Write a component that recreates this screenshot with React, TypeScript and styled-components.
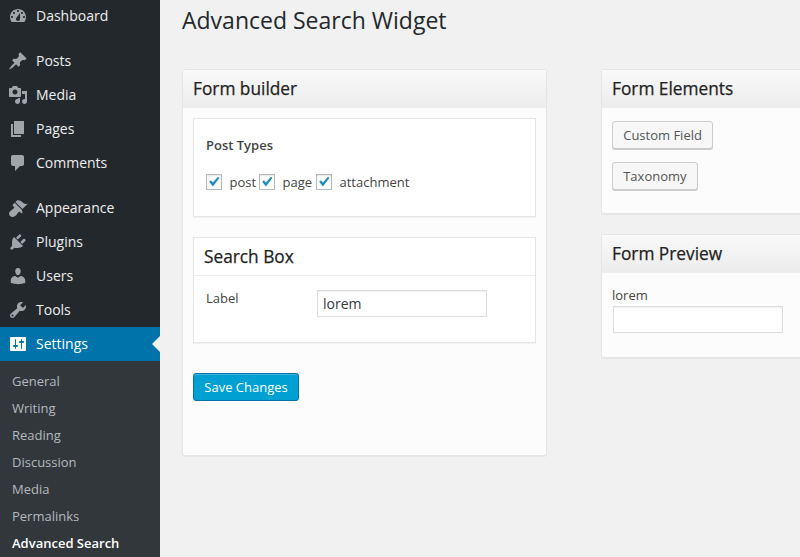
import React from 'react';
import styled, { createGlobalStyle } from 'styled-components';

const GlobalStyle = createGlobalStyle`
  html, body {
    margin: 0;
    padding: 0;
    height: 100%;
    overflow: hidden;
    background: #f1f1f1;
  }
  * {
    box-sizing: border-box;
  }
  body {
    font-family: "Open Sans", "Liberation Sans", sans-serif;
    font-size: 13px;
    color: #444;
  }
`;

const Page = styled.div`
  display: flex;
  width: 800px;
  height: 557px;
  overflow: hidden;
  background: #f1f1f1;
`;

const Sidebar = styled.nav`
  flex: 0 0 160px;
  height: 557px;
  background: #23282d;
  overflow: hidden;
`;

const MenuGroup = styled.div`
  margin-bottom: 11px;

  &:first-child {
    margin-top: -1px;
  }
`;

const MenuItem = styled.a<{ $active?: boolean }>`
  position: relative;
  display: flex;
  align-items: center;
  height: 34px;
  padding-left: 8px;
  gap: 8px;
  font-size: 14px;
  color: ${(p) => (p.$active ? '#fff' : '#eee')};
  background: ${(p) => (p.$active ? '#0073aa' : 'transparent')};

  svg {
    flex: 0 0 20px;
    fill: ${(p) => (p.$active ? '#fff' : '#a0a5aa')};
  }
`;

const MenuLabel = styled.span`
  margin-bottom: 2px;
`;

const ActiveArrow = styled.span`
  position: absolute;
  right: 0;
  top: 50%;
  margin-top: -8px;
  border: 8px solid transparent;
  border-left-width: 0;
  border-right-color: #f1f1f1;
`;

const Submenu = styled.div`
  background: #32373c;
  padding-top: 6px;
  height: 196px;
`;

const SubItem = styled.a<{ $current?: boolean }>`
  display: flex;
  align-items: center;
  height: 27px;
  padding-left: 12px;
  font-size: 13px;
  font-weight: ${(p) => (p.$current ? 600 : 400)};
  color: ${(p) => (p.$current ? '#fff' : '#b4b9be')};
`;

const Main = styled.main`
  flex: 1;
  min-width: 0;
  padding-left: 22px;
`;

const Title = styled.h1`
  margin: 0;
  height: 69px;
  padding-top: 3px;
  font-size: 23px;
  line-height: 34px;
  font-weight: 400;
  color: #23282d;
`;

const Columns = styled.div`
  display: flex;
  align-items: flex-start;
  gap: 54px;
`;

const BuilderColumn = styled.div`
  flex: 0 0 365px;
`;

const SideColumn = styled.div`
  flex: 0 0 240px;
  display: flex;
  flex-direction: column;
  gap: 20px;
`;

const Panel = styled.section<{ $height: number }>`
  height: ${(p) => p.$height}px;
  background: #fcfcfc;
  border: 1px solid #e5e5e5;
  border-radius: 3px;
  box-shadow: 0 1px 1px rgba(0, 0, 0, 0.04);
`;

const PanelHeader = styled.h3`
  margin: 0;
  height: 38px;
  padding-left: 10px;
  font-size: 17.3px;
  line-height: 38px;
  font-weight: 400;
  color: #222;
  -webkit-text-stroke: 0.25px #222;
  background: linear-gradient(to bottom, #f9f9f9, #ececec);
`;

const BuilderBody = styled.div`
  padding: 10px;
  display: flex;
  flex-direction: column;
  gap: 20px;
`;

const Card = styled.div<{ $height: number }>`
  height: ${(p) => p.$height}px;
  background: #fff;
  border: 1px solid #e5e5e5;
  box-shadow: 0 1px 1px rgba(0, 0, 0, 0.04);
`;

const TypesBody = styled.div`
  padding: 17px 12px 0;
`;

const TypesLabel = styled.div`
  font-size: 13px;
  line-height: 18px;
  font-weight: 600;
  color: #444;
  margin-bottom: 20px;
`;

const CheckRow = styled.div`
  display: flex;
  align-items: center;
  height: 16px;
  gap: 3px;
`;

const CheckLabel = styled.label<{ $width?: number }>`
  display: flex;
  align-items: center;
  gap: 7.5px;
  width: ${(p) => (p.$width ? `${p.$width}px` : 'auto')};
  font-size: 13px;
  line-height: 16px;
  color: #444;
`;

const CheckBox = styled.span`
  display: flex;
  align-items: center;
  justify-content: center;
  flex: 0 0 16px;
  width: 16px;
  height: 16px;
  background: #fff;
  border: 1px solid #b4b9be;
  box-shadow: inset 0 1px 2px rgba(0, 0, 0, 0.1);

  svg {
    fill: #1e8cbe;
  }
`;

const CardTitle = styled.h4`
  margin: 0;
  height: 38px;
  padding-left: 10px;
  font-size: 17.3px;
  line-height: 38px;
  font-weight: 400;
  color: #222;
  -webkit-text-stroke: 0.25px #222;
  border-bottom: 1px solid #eee;
`;

const FieldRow = styled.div`
  display: flex;
  align-items: flex-start;
  padding: 14px 0 0 12px;
`;

const FieldLabel = styled.label`
  flex: 0 0 111px;
  margin-top: -1px;
  font-size: 13px;
  line-height: 18px;
  color: #444;
`;

const TextInput = styled.input`
  display: block;
  width: 170px;
  height: 27px;
  padding: 0 5px;
  font-family: inherit;
  font-size: 14px;
  color: #32373c;
  background: #fff;
  border: 1px solid #ddd;
  border-radius: 0;
  outline: none;
  box-shadow: inset 0 1px 2px rgba(0, 0, 0, 0.07);
`;

const PrimaryButton = styled.button`
  display: block;
  width: 106px;
  height: 28px;
  margin-top: 10px;
  padding: 0;
  font-family: inherit;
  font-size: 13px;
  color: #fff;
  background: #00a0d2;
  border: 1px solid #0073aa;
  border-radius: 3px;
  box-shadow: inset 0 1px 0 rgba(120, 200, 230, 0.5);
`;

const ElementsBody = styled.div`
  padding: 13px 10px 0;
  display: flex;
  flex-direction: column;
  align-items: flex-start;
  gap: 13px;
`;

const SecondaryButton = styled.button`
  height: 28px;
  padding: 0 10.2px;
  font-family: inherit;
  font-size: 13px;
  color: #555;
  background: #f7f7f7;
  border: 1px solid #ccc;
  border-radius: 3px;
  box-shadow: 0 1px 0 #ccc;
`;

const PreviewBody = styled.div`
  padding: 13px 10px 0;
`;

const PreviewLabel = styled.label`
  display: block;
  font-size: 13px;
  line-height: 18px;
  color: #444;
  margin-bottom: 2px;
`;

const PreviewInput = styled(TextInput)`
  margin-left: 1px;
`;

const Dash = ({ d }: { d: string }) => (
  <svg width="20" height="20" viewBox="0 0 20 20" aria-hidden="true">
    <path d={d} />
  </svg>
);

const icons = {
  dashboard:
    'M3.76 16h12.48c1.1-1.37 1.76-3.11 1.76-5 0-4.42-3.58-8-8-8s-8 3.58-8 8c0 1.89.66 3.63 1.76 5zM10 4c.55 0 1 .45 1 1s-.45 1-1 1-1-.45-1-1 .45-1 1-1zM6 6c.55 0 1 .45 1 1s-.45 1-1 1-1-.45-1-1 .45-1 1-1zm8 0c.55 0 1 .45 1 1s-.45 1-1 1-1-.45-1-1 .45-1 1-1zm-5.37 5.55L12 7v6c0 1.1-.9 2-2 2s-2-.9-2-2c0-.57.24-1.08.63-1.45zM4 10c.55 0 1 .45 1 1s-.45 1-1 1-1-.45-1-1 .45-1 1-1zm12 0c.55 0 1 .45 1 1s-.45 1-1 1-1-.45-1-1 .45-1 1-1z',
  posts:
    'M10.44 3.02l1.82-1.82 6.36 6.35-1.83 1.82c-1.05-.68-2.48-.57-3.41.36l-.75.75c-.92.93-1.04 2.35-.35 3.41l-1.83 1.82-2.41-2.41-2.8 2.79c-.42.42-3.38 2.71-3.8 2.29s1.86-3.39 2.28-3.81l2.79-2.79L4.1 9.36l1.83-1.82c1.05.69 2.48.57 3.4-.36l.75-.75c.93-.92 1.05-2.35.36-3.41z',
  media:
    'M13 11V4c0-.55-.45-1-1-1h-1.67L9 1H5L3.67 3H2c-.55 0-1 .45-1 1v7c0 .55.45 1 1 1h10c.55 0 1-.45 1-1zM7 4.5c1.38 0 2.5 1.12 2.5 2.5S8.38 9.5 7 9.5 4.5 8.38 4.5 7 5.62 4.5 7 4.5zM14 6h5v10.5c0 1.38-1.12 2.5-2.5 2.5S14 17.88 14 16.5s1.12-2.5 2.5-2.5c.17 0 .34.02.5.05V9h-3V6zm-4 8.05V13h2v3.5c0 1.38-1.12 2.5-2.5 2.5S7 17.88 7 16.5 8.12 14 9.5 14c.17 0 .34.02.5.05z',
  pages: 'M6 15V2h10v13H6zm-1 1h8v2H3V5h2v11z',
  comments:
    'M5 2h9c1.1 0 2 .9 2 2v7c0 1.1-.9 2-2 2h-2l-5 5v-5H5c-1.1 0-2-.9-2-2V4c0-1.1.9-2 2-2z',
  appearance:
    'M14.48 11.06L7.41 3.99l1.5-1.5c.5-.56 2.3-.47 3.51.32 1.21.8 1.43 1.28 2.91 2.1 1.18.64 2.45 1.26 4.45.85zm-.71.71L6.7 4.7 4.93 6.47c-.39.39-.39 1.02 0 1.41l1.06 1.06c.39.39.39 1.03 0 1.42-.6.6-1.43 1.11-2.21 1.69-.35.26-.7.53-1.01.84C1.43 13.23.91 14.66 1.1 15.9c.19 1.25.65 1.66 1 2.01.35.35.76.81 2 1 1.24.19 2.68-.33 3.99-1.67.31-.31.58-.66.84-1.01.58-.78 1.09-1.61 1.69-2.21.39-.39 1.03-.39 1.42 0l1.06 1.06c.39.39 1.02.39 1.41 0z',
  plugins:
    'M13.11 4.36L9.87 7.6 8 5.73l3.24-3.24c.35-.34 1.05-.2 1.56.32.52.51.66 1.21.31 1.55zm-8 1.77l.91-1.12 9.01 9.01-1.19.84c-.71.71-2.63 1.16-3.82 1.16H6.14L4.9 17.26c-.59.59-1.54.59-2.12 0-.59-.58-.59-1.53 0-2.12l1.24-1.24v-3.88c0-1.13.4-3.19 1.09-3.89zm7.26 3.97l3.24-3.24c.34-.35 1.04-.21 1.55.31.52.51.66 1.21.31 1.55l-3.24 3.25z',
  users:
    'M10 9.25c-2.27 0-2.73-3.44-2.73-3.44C7 4.02 7.82 2 9.97 2c2.16 0 2.98 2.02 2.71 3.81 0 0-.41 3.44-2.68 3.44zm0 2.57L12.72 10c2.39 0 4.52 2.33 4.52 4.53v2.49s-3.65 1.13-7.24 1.13c-3.65 0-7.24-1.13-7.24-1.13v-2.49c0-2.25 1.94-4.48 4.47-4.48z',
  tools:
    'M16.68 9.77c-1.34 1.34-3.3 1.67-4.95.99l-5.41 6.52c-.99.99-2.59.99-3.58 0s-.99-2.59 0-3.57l6.52-5.42c-.68-1.65-.35-3.61.99-4.95 1.28-1.28 3.12-1.62 4.72-1.06l-2.89 2.89 2.82 2.82 2.86-2.87c.53 1.58.18 3.39-1.08 4.65zM3.81 16.21c.4.39 1.04.39 1.43 0 .4-.4.4-1.04 0-1.43-.39-.4-1.03-.4-1.43 0-.39.39-.39 1.03 0 1.43z',
  settings:
    'M18 16V4c0-.55-.45-1-1-1H3c-.55 0-1 .45-1 1v12c0 .55.45 1 1 1h14c.55 0 1-.45 1-1zM8 11h1c.55 0 1 .45 1 1s-.45 1-1 1H8v1.5c0 .28-.22.5-.5.5s-.5-.22-.5-.5V13H6c-.55 0-1-.45-1-1s.45-1 1-1h1V5.5c0-.28.22-.5.5-.5s.5.22.5.5V11zm5-2h-1c-.55 0-1-.45-1-1s.45-1 1-1h1V5.5c0-.28.22-.5.5-.5s.5.22.5.5V7h1c.55 0 1 .45 1 1s-.45 1-1 1h-1v5.5c0 .28-.22.5-.5.5s-.5-.22-.5-.5V9z',
};

const contentMenu = [
  ['Posts', icons.posts],
  ['Media', icons.media],
  ['Pages', icons.pages],
  ['Comments', icons.comments],
];

const adminMenu = [
  ['Appearance', icons.appearance],
  ['Plugins', icons.plugins],
  ['Users', icons.users],
  ['Tools', icons.tools],
];

const subItems = ['General', 'Writing', 'Reading', 'Discussion', 'Media', 'Permalinks'];

const Checked = ({ label, width }: { label: string; width?: number }) => (
  <CheckLabel $width={width}>
    <CheckBox>
      <svg width="14" height="14" viewBox="0 0 14 14" aria-hidden="true">
        <path d="M2.2 6.8l1.7-1.5 2 2.2L11 1.8l1.4 1.3-6.5 8.4z" />
      </svg>
    </CheckBox>
    {label}
  </CheckLabel>
);

export default function App() {
  return (
    <Page>
      <GlobalStyle />
      <Sidebar>
        <MenuGroup>
          <MenuItem>
            <Dash d={icons.dashboard} />
            <MenuLabel>Dashboard</MenuLabel>
          </MenuItem>
        </MenuGroup>
        <MenuGroup>
          {contentMenu.map(([name, d]) => (
            <MenuItem key={name}>
              <Dash d={d} />
              <MenuLabel>{name}</MenuLabel>
            </MenuItem>
          ))}
        </MenuGroup>
        {adminMenu.map(([name, d]) => (
          <MenuItem key={name}>
            <Dash d={d} />
            <MenuLabel>{name}</MenuLabel>
          </MenuItem>
        ))}
        <MenuItem $active>
          <Dash d={icons.settings} />
          <MenuLabel>Settings</MenuLabel>
          <ActiveArrow />
        </MenuItem>
        <Submenu>
          {subItems.map((name) => (
            <SubItem key={name}>{name}</SubItem>
          ))}
          <SubItem $current>Advanced Search</SubItem>
        </Submenu>
      </Sidebar>
      <Main>
        <Title>Advanced Search Widget</Title>
        <Columns>
          <BuilderColumn>
            <Panel $height={387}>
              <PanelHeader>Form builder</PanelHeader>
              <BuilderBody>
                <Card $height={99}>
                  <TypesBody>
                    <TypesLabel>Post Types</TypesLabel>
                    <CheckRow>
                      <Checked label="post" width={50} />
                      <Checked label="page" width={54} />
                      <Checked label="attachment" />
                    </CheckRow>
                  </TypesBody>
                </Card>
                <Card $height={106}>
                  <CardTitle>Search Box</CardTitle>
                  <FieldRow>
                    <FieldLabel>Label</FieldLabel>
                    <TextInput defaultValue="lorem" />
                  </FieldRow>
                </Card>
                <PrimaryButton>Save Changes</PrimaryButton>
              </BuilderBody>
            </Panel>
          </BuilderColumn>
          <SideColumn>
            <Panel $height={145}>
              <PanelHeader>Form Elements</PanelHeader>
              <ElementsBody>
                <SecondaryButton>Custom Field</SecondaryButton>
                <SecondaryButton>Taxonomy</SecondaryButton>
              </ElementsBody>
            </Panel>
            <Panel $height={124}>
              <PanelHeader>Form Preview</PanelHeader>
              <PreviewBody>
                <PreviewLabel>lorem</PreviewLabel>
                <PreviewInput />
              </PreviewBody>
            </Panel>
          </SideColumn>
        </Columns>
      </Main>
    </Page>
  );
}
